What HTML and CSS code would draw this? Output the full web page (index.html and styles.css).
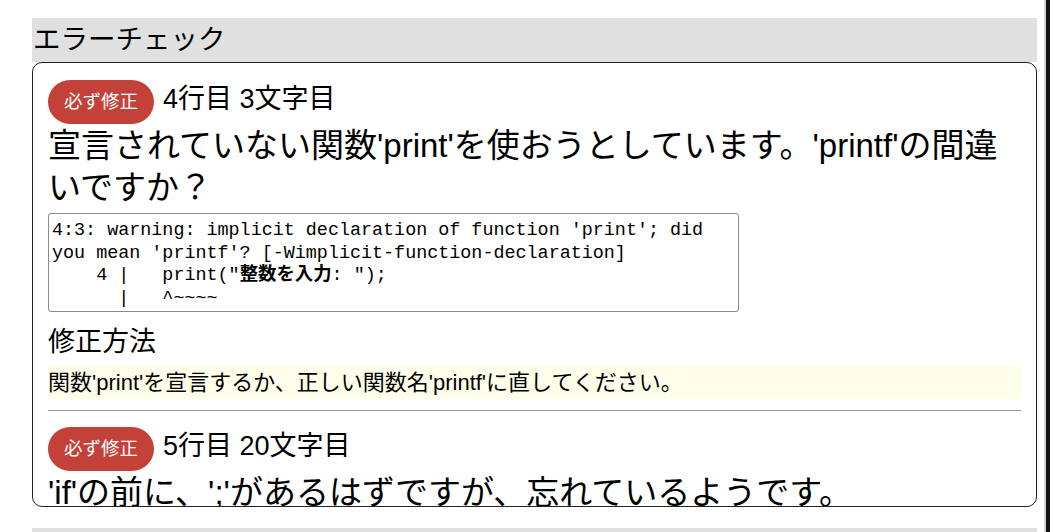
FILE: index.html
```html
<!DOCTYPE html>
<html lang="ja">
<head>
<meta charset="utf-8">
<title>エラーチェック</title>
<link rel="stylesheet" href="styles.css">
</head>
<body>
<div class="window">
  <main class="page">
    <section class="check">
      <h2 class="check-title">エラーチェック</h2>
      <div class="check-list">
        <article class="issue">
          <div class="issue-head"><span class="badge">必ず修正</span><span class="pos">4行目 3文字目</span></div>
          <p class="issue-msg">宣言されていない関数'print'を使おうとしています。'printf'の間違いですか？</p>
          <pre class="issue-raw">4:3: warning: implicit declaration of function 'print'; did you mean 'printf'? [-Wimplicit-function-declaration]
    4 |   print("<b class="jp">整数を入力</b>: ");
      |   ^~~~~</pre>
          <h3 class="fix-title">修正方法</h3>
          <p class="fix-text">関数'print'を宣言するか、正しい関数名'printf'に直してください。</p>
        </article>
        <hr class="divider">
        <article class="issue">
          <div class="issue-head"><span class="badge">必ず修正</span><span class="pos">5行目 20文字目</span></div>
          <p class="issue-msg">'if'の前に、';'があるはずですが、忘れているようです。</p>
        </article>
      </div>
    </section>
    <section class="check">
      <div class="check-title check-title-empty"></div>
    </section>
  </main>
  <div class="edge"></div>
</div>
</body>
</html>
```

FILE: styles.css
```css
html, body {
  margin: 0;
  padding: 0;
  background: #ffffff;
}

body {
  font-family: "Liberation Sans", "Noto Sans CJK JP", sans-serif;
  color: #000000;
}

.window {
  display: flex;
  height: 532px;
  overflow: hidden;
}

.page {
  flex: 1;
  min-width: 0;
  padding: 18px 7px 0 32px;
}

.edge {
  width: 4px;
  flex: none;
  border-left: 2px solid #d4d4d4;
  background: #111111;
}

.check-title {
  margin: 0;
  height: 44px;
  line-height: 44px;
  padding: 0 1px;
  font-size: 27.5px;
  font-weight: normal;
  background: #e0e0e0;
}

.check-list {
  box-sizing: border-box;
  height: 445px;
  overflow: hidden;
  border: 1.5px solid #222222;
  border-radius: 10px;
  padding: 17px 15px 0 15px;
  margin-bottom: 21px;
}

.issue-head {
  display: flex;
  align-items: baseline;
  gap: 9px;
  height: 44px;
}

.badge {
  height: 44px;
  line-height: 44px;
  padding: 0 16px;
  border-radius: 22px;
  background: #c4413a;
  color: #ffffff;
  font-size: 18.5px;
}

.pos {
  font-size: 27px;
  line-height: 32px;
}

.issue-msg {
  margin: 0;
  font-size: 33px;
  line-height: 42px;
  padding-top: 1px;
}

.issue-raw {
  box-sizing: border-box;
  width: 691px;
  margin: 4px 0 0;
  padding: 6px 3px 1px;
  border: 1px solid #8a8a8a;
  border-radius: 3px;
  font-family: "Liberation Mono", "Noto Sans CJK JP", monospace;
  font-size: 18.4px;
  line-height: 22.5px;
  white-space: pre-wrap;
}

.issue-raw .jp {
  font-weight: bold;
}

.fix-title {
  margin: 12px 0 0;
  font-size: 27px;
  line-height: 36px;
  font-weight: normal;
}

.fix-text {
  margin: 6px 0 0;
  height: 33px;
  line-height: 33px;
  font-size: 22px;
  background: #fffeea;
}

.divider {
  margin: 11px 0 16px;
  border: 0;
  border-top: 1px solid #9a9a9a;
  height: 0;
}
```
